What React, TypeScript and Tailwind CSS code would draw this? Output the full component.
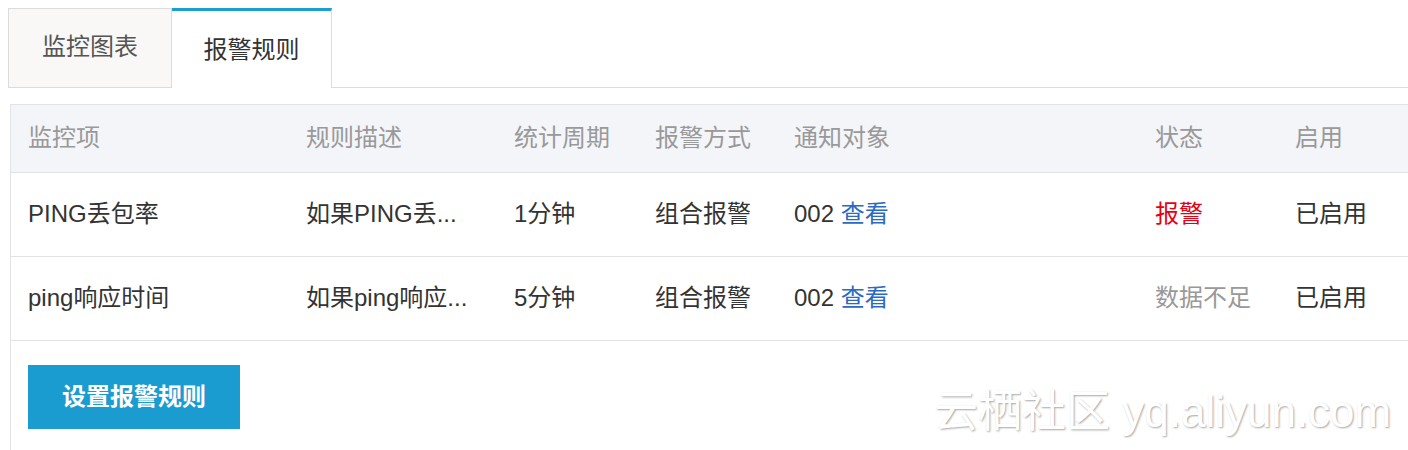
import React from 'react'

interface Rule {
  item: string
  desc: string
  period: string
  method: string
  target: string
  status: string
  alarm: boolean
  enabled: string
}

const rules: Rule[] = [
  { item: 'PING丢包率', desc: '如果PING丢...', period: '1分钟', method: '组合报警', target: '002', status: '报警', alarm: true, enabled: '已启用' },
  { item: 'ping响应时间', desc: '如果ping响应...', period: '5分钟', method: '组合报警', target: '002', status: '数据不足', alarm: false, enabled: '已启用' },
]

// every cell gets the same left padding, column widths measured from the screenshot
const cols = 'grid grid-cols-[277px_208px_141px_139px_361px_140px_1fr] [&>div]:pl-[18px] [&>div:first-child]:pl-[17px]'
const font = { fontFamily: '"Liberation Sans", "Noto Sans CJK SC", sans-serif' }

const App: React.FC = () => {
  return (
    <div className="relative w-[1408px] h-[450px] overflow-hidden bg-white text-[24px] text-[#333]" style={font}>
      {/* tabs */}
      <div className="flex pt-2 pl-2">
        <div className="w-[164px] h-[80px] flex items-center justify-center pb-[2px] border border-[#dcdcdc] bg-[#f9f8f7] text-[#555]">
          监控图表
        </div>
        <div className="w-[160px] h-[80px] flex items-center justify-center border-t-[3px] border-t-[#1a9fd0] border-r border-r-[#dcdcdc] bg-white text-[#333]">
          报警规则
        </div>
        <div className="flex-1 border-b border-[#dcdcdc]" />
      </div>

      {/* rules table */}
      <div className="ml-[10px] mt-4 border-l border-[#e2e3e7] h-[400px]">
        <div className={`${cols} h-[69px] items-center pb-[2px] bg-[#f4f5f9] border-t border-b border-[#e2e3e7] text-[#999]`}>
          <div>监控项</div>
          <div>规则描述</div>
          <div>统计周期</div>
          <div>报警方式</div>
          <div>通知对象</div>
          <div>状态</div>
          <div>启用</div>
        </div>
        {rules.map((r) => (
          <div key={r.item} className={`${cols} h-[84px] items-center pb-[2px] border-b border-[#e2e3e7]`}>
            <div>{r.item}</div>
            <div>{r.desc}</div>
            <div>{r.period}</div>
            <div>{r.method}</div>
            <div>
              {r.target} <span className="text-[#2a6ac4]">查看</span>
            </div>
            <div className={r.alarm ? 'text-[#e60012]' : 'text-[#999]'}>{r.status}</div>
            <div>{r.enabled}</div>
          </div>
        ))}
        <div className="pl-[17px] pt-6">
          <button className="w-[212px] h-[64px] bg-[#1b9cd0] text-white font-bold text-[24px]">
            设置报警规则
          </button>
        </div>
      </div>

      {/* watermark */}
      <div className="absolute left-[934px] top-[390px] whitespace-nowrap text-[44px] leading-none text-white [text-shadow:1px_1px_2px_rgba(0,0,0,0.35)]">
        云栖社区 yq.aliyun.com
      </div>
    </div>
  )
}

export default App
